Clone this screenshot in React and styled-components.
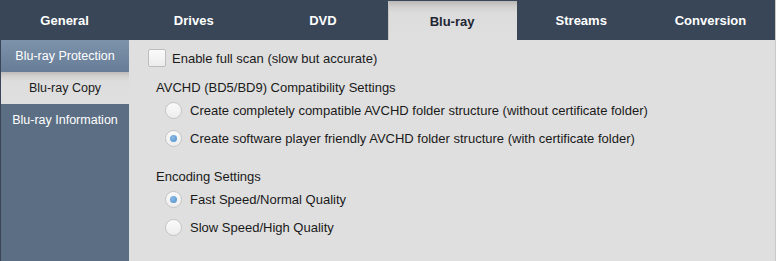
import React, { useState } from "react";
import styled, { createGlobalStyle } from "styled-components";

const GlobalStyle = createGlobalStyle`
  html, body {
    margin: 0;
    padding: 0;
    background: #dfdfdf;
  }
  * {
    box-sizing: border-box;
  }
`;

const Window = styled.div`
  width: 776px;
  height: 261px;
  display: flex;
  flex-direction: column;
  overflow: hidden;
  font-family: "Liberation Sans", Arial, sans-serif;
  font-size: 13px;
  background: #dfdfdf;
  border-right: 1px solid #c9c9c9;
`;

const TabBar = styled.div`
  height: 40px;
  display: grid;
  grid-template-columns: repeat(6, 1fr);
  background: #394657;
  flex-shrink: 0;
`;

const Tab = styled.div`
  display: flex;
  align-items: center;
  justify-content: center;
  font-weight: bold;
  font-size: 13px;
  padding-top: 1px;
  color: ${(p) => (p.$active ? "#1e2633" : "#ffffff")};
  background: ${(p) =>
    p.$active
      ? "linear-gradient(to bottom, #b9b7b5 0px, #d2d1d0 6px, #dcdcdc 12px, #dfdfdf 100%)"
      : "transparent"};
  margin-top: ${(p) => (p.$active ? "1px" : "0")};
  box-shadow: ${(p) => (p.$active ? "inset 1px 0 0 #c4c4c4" : "none")};
  cursor: pointer;
`;

const Body = styled.div`
  flex: 1;
  display: flex;
  min-height: 0;
`;

const Sidebar = styled.div`
  width: 129px;
  flex-shrink: 0;
  display: flex;
  flex-direction: column;
  background: #5b6e83;
  border-left: 1px solid #3a4657;
`;

const SideItem = styled.div`
  height: 32px;
  display: flex;
  align-items: center;
  justify-content: center;
  font-size: 12.5px;
  cursor: pointer;
  color: ${(p) => (p.$state === "current" ? "#1a1a1a" : "#ffffff")};
  background: ${(p) =>
    p.$state === "current"
      ? "linear-gradient(to bottom, #bdbcbb 0px, #d2d1d0 4px, #dddddd 9px, #dfdfdf 100%)"
      : p.$state === "hover"
      ? "linear-gradient(to bottom, #7d93ab 0%, #677d97 100%)"
      : "#5b6e83"};
`;

const Content = styled.div`
  flex: 1;
  padding: 9px 0 0 19px;
  display: flex;
  flex-direction: column;
  color: #1a1a1a;
`;

const CheckRow = styled.label`
  display: flex;
  align-items: center;
  gap: 6px;
  height: 18px;
  cursor: pointer;
`;

const CheckBox = styled.span`
  width: 18px;
  height: 18px;
  border: 1px solid #bdbdbd;
  border-radius: 2px;
  background: linear-gradient(to bottom, #fbfbfb 0%, #ececec 100%);
  display: inline-block;
`;

const GroupLabel = styled.div`
  margin-top: ${(p) => p.$top}px;
  margin-left: 8px;
  height: 16px;
  line-height: 16px;
`;

const RadioRow = styled.label`
  display: flex;
  align-items: center;
  gap: 8px;
  height: 28px;
  padding-left: 17px;
  cursor: pointer;
`;

const RadioCircle = styled.span`
  width: 17px;
  height: 17px;
  border-radius: 50%;
  border: 1px solid #c4c4c4;
  background: linear-gradient(to bottom, #fafafa 0%, #ededed 100%);
  display: flex;
  align-items: center;
  justify-content: center;

  &::after {
    content: "";
    width: 7px;
    height: 7px;
    border-radius: 50%;
    background: radial-gradient(circle at 40% 35%, #8bbbe6 0%, #4f8ecb 100%);
    display: ${(p) => (p.$checked ? "block" : "none")};
  }
`;

const tabs = ["General", "Drives", "DVD", "Blu-ray", "Streams", "Conversion"];

function Radio({ checked, onSelect, children }) {
  return (
    <RadioRow onClick={onSelect}>
      <RadioCircle $checked={checked} />
      <span>{children}</span>
    </RadioRow>
  );
}

export default function App() {
  const [avchd, setAvchd] = useState(1);
  const [encoding, setEncoding] = useState(0);

  return (
    <>
      <GlobalStyle />
      <Window>
        <TabBar>
          {tabs.map((t) => (
            <Tab key={t} $active={t === "Blu-ray"}>
              {t}
            </Tab>
          ))}
        </TabBar>
        <Body>
          <Sidebar>
            <SideItem $state="hover">Blu-ray Protection</SideItem>
            <SideItem $state="current">Blu-ray Copy</SideItem>
            <SideItem>Blu-ray Information</SideItem>
          </Sidebar>
          <Content>
            <CheckRow>
              <CheckBox />
              <span>Enable full scan (slow but accurate)</span>
            </CheckRow>

            <GroupLabel $top={13}>AVCHD (BD5/BD9) Compatibility Settings</GroupLabel>
            <Radio checked={avchd === 0} onSelect={() => setAvchd(0)}>
              Create completely compatible AVCHD folder structure (without certificate folder)
            </Radio>
            <Radio checked={avchd === 1} onSelect={() => setAvchd(1)}>
              Create software player friendly AVCHD folder structure (with certificate folder)
            </Radio>

            <GroupLabel $top={17}>Encoding Settings</GroupLabel>
            <Radio checked={encoding === 0} onSelect={() => setEncoding(0)}>
              Fast Speed/Normal Quality
            </Radio>
            <Radio checked={encoding === 1} onSelect={() => setEncoding(1)}>
              Slow Speed/High Quality
            </Radio>
          </Content>
        </Body>
      </Window>
    </>
  );
}
